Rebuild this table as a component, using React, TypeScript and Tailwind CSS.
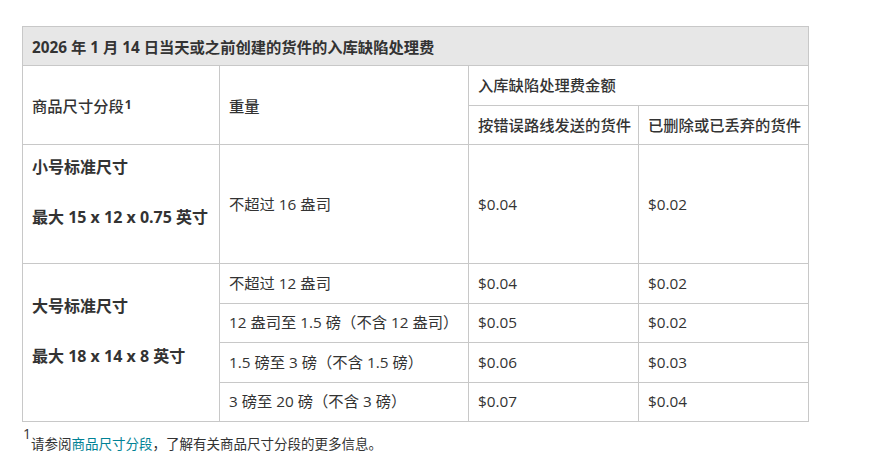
import React from "react";

const FONT = "font-['Open_Sans','Noto_Sans_CJK_SC',sans-serif]";

const cell = "border border-[#c8c8c8] pl-[9px] pr-[4px] align-middle whitespace-nowrap";

const largeRows = [
  { weight: "不超过 12 盎司", misrouted: "$0.04", removed: "$0.02" },
  { weight: "12 盎司至 1.5 磅（不含 12 盎司）", misrouted: "$0.05", removed: "$0.02" },
  { weight: "1.5 磅至 3 磅（不含 1.5 磅）", misrouted: "$0.06", removed: "$0.03" },
  { weight: "3 磅至 20 磅（不含 3 磅）", misrouted: "$0.07", removed: "$0.04" },
];

// size tier cell: name + max dimensions, with extra room underneath
const TierCell = ({ name, dims, rowSpan }: { name: string; dims: string; rowSpan?: number }) => (
  <td rowSpan={rowSpan} className={`${cell} font-bold text-[16px]`}>
    <div className="pb-[24px]">
      <p className="leading-[22px] mb-[28px]">{name}</p>
      <p className="leading-[22px]">{dims}</p>
    </div>
  </td>
);

export default function App() {
  return (
    <div className={`${FONT} bg-white w-[878px] h-[468px] pt-[26px] pl-[22px] text-[#333] text-[15.3px]`}>
      <table className="border-collapse table-fixed w-[786px]">
        <colgroup>
          <col className="w-[197px]" />
          <col className="w-[249px]" />
          <col className="w-[170px]" />
          <col className="w-[170px]" />
        </colgroup>
        <thead>
          <tr className="h-[39px]">
            <th colSpan={4} className={`${cell} bg-[#e7e7e7] text-left font-bold pt-[3px]`}>
              2026 年 1 月 14 日当天或之前创建的货件的入库缺陷处理费
            </th>
          </tr>
          <tr className="h-[40px]">
            <th rowSpan={2} className={`${cell} text-left font-medium pt-[3px]`}>
              商品尺寸分段<sup className="text-[12px] font-bold relative -top-[3px] ml-[1px]">1</sup>
            </th>
            <th rowSpan={2} className={`${cell} text-left font-medium pt-[3px]`}>重量</th>
            <th colSpan={2} className={`${cell} text-left font-medium`}>入库缺陷处理费金额</th>
          </tr>
          <tr className="h-[39px]">
            <th className={`${cell} text-left font-medium`}>按错误路线发送的货件</th>
            <th className={`${cell} text-left font-medium`}>已删除或已丢弃的货件</th>
          </tr>
        </thead>
        <tbody>
          <tr className="h-[119px]">
            <TierCell name="小号标准尺寸" dims="最大 15 x 12 x 0.75 英寸" />
            <td className={cell}>不超过 16 盎司</td>
            <td className={cell}>$0.04</td>
            <td className={cell}>$0.02</td>
          </tr>
          {largeRows.map((r, i) => (
            <tr key={r.weight} className="h-[39.5px]">
              {i === 0 && <TierCell rowSpan={4} name="大号标准尺寸" dims="最大 18 x 14 x 8 英寸" />}
              <td className={cell}>{r.weight}</td>
              <td className={cell}>{r.misrouted}</td>
              <td className={cell}>{r.removed}</td>
            </tr>
          ))}
        </tbody>
      </table>
      <div className="relative text-[13.5px] leading-[16px] pt-[14px]">
        <span className="absolute left-[1px] top-[5px] text-[14px] leading-[14px] text-[#333]">1</span>
        <p className="pl-[9px]">
          请参阅<a className="text-[#008296]">商品尺寸分段</a>，了解有关商品尺寸分段的更多信息。
        </p>
      </div>
    </div>
  );
}
